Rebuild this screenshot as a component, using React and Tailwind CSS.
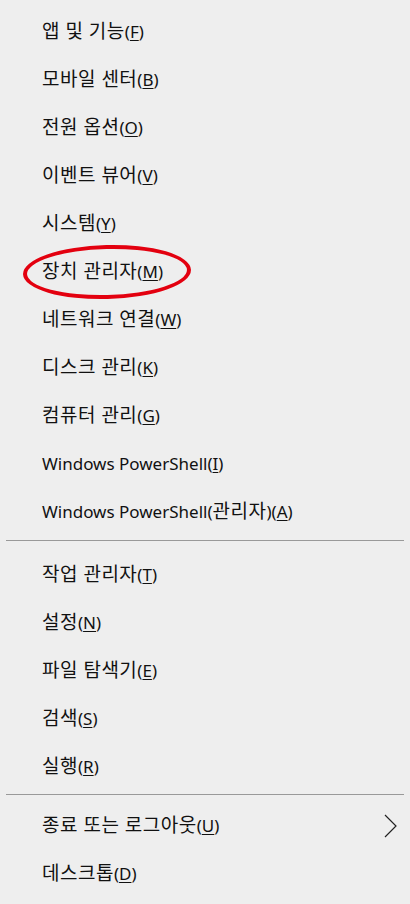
const groups = [
  [
    ['앱 및 기능', 'F'],
    ['모바일 센터', 'B'],
    ['전원 옵션', 'O'],
    ['이벤트 뷰어', 'V'],
    ['시스템', 'Y'],
    ['장치 관리자', 'M', true],
    ['네트워크 연결', 'W'],
    ['디스크 관리', 'K'],
    ['컴퓨터 관리', 'G'],
    ['Windows PowerShell', 'I'],
    ['Windows PowerShell(관리자)', 'A'],
  ],
  [
    ['작업 관리자', 'T'],
    ['설정', 'N'],
    ['파일 탐색기', 'E'],
    ['검색', 'S'],
    ['실행', 'R'],
  ],
  [
    ['종료 또는 로그아웃', 'U', false, true],
    ['데스크톱', 'D'],
  ],
];

// 한글은 조금 크게, 라틴 문자는 그대로
const Label = ({ text }) =>
  text.split(/([가-힣 ]+)/).filter(Boolean).map((part, i) =>
    /[가-힣]/.test(part) ? (
      <span key={i} className="text-[19px] tracking-[0.5px]">{part}</span>
    ) : (
      <span key={i}>{part}</span>
    )
  );

const Item = ({ label, hotkey, circled, submenu }) => (
  <div className="relative flex items-center h-12 pl-[42px]">
    <span className="text-[17px] text-[#111] leading-none">
      <Label text={label} />(<span className="underline underline-offset-2">{hotkey}</span>)
    </span>
    {submenu && (
      <svg width="13" height="24" viewBox="0 0 13 24" className="absolute left-[384px] top-[13px]">
        <polyline points="1,1 12,12 1,23" fill="none" stroke="#222" strokeWidth="1.2" />
      </svg>
    )}
    {circled && (
      <div className="absolute left-[23px] top-[-2px] w-[168px] h-[54px] rounded-[50%] border-4 border-[#e3000f] rotate-[-1.5deg]" />
    )}
  </div>
);

export default function App() {
  return (
    <div
      className="w-[410px] h-[904px] bg-[#eeeeee] pt-[7px] overflow-hidden"
      style={{ fontFamily: '"Noto Sans", "Noto Sans CJK KR", sans-serif' }}
    >
      {groups.map((group, gi) => (
        <div key={gi}>
          {gi === 1 && <div className="mx-[6px] mt-[5px] mb-[9px] h-px bg-[#999]" />}
          {gi === 2 && <div className="mx-[6px] mt-[4px] mb-[6px] h-px bg-[#999]" />}
          {group.map(([label, hotkey, circled, submenu]) => (
            <Item key={label} label={label} hotkey={hotkey} circled={circled} submenu={submenu} />
          ))}
        </div>
      ))}
    </div>
  );
}
